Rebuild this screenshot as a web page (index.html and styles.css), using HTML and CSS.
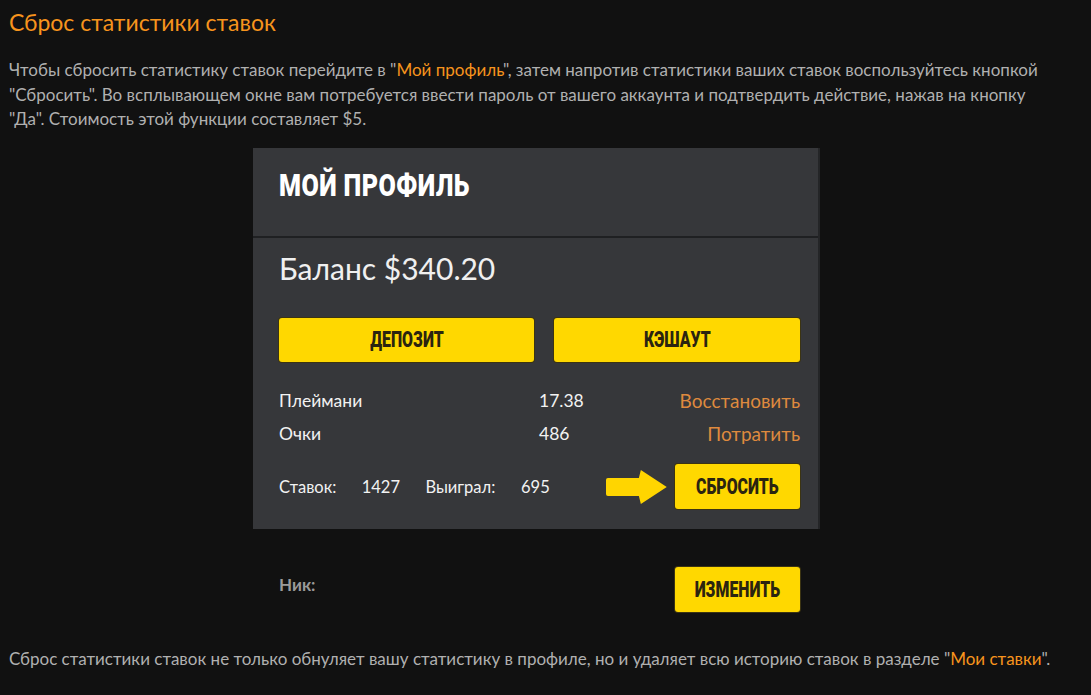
FILE: index.html
```html
<!DOCTYPE html>
<html lang="ru">
<head>
<meta charset="utf-8">
<link rel="stylesheet" href="styles.css">
</head>
<body>
<h2 class="title">Сброс статистики ставок</h2>
<p class="text top">Чтобы сбросить статистику ставок перейдите в "<a class="link">Мой профиль</a>", затем напротив статистики ваших ставок воспользуйтесь кнопкой "Сбросить". Во всплывающем окне вам потребуется ввести пароль от вашего аккаунта и подтвердить действие, нажав на кнопку "Да". Стоимость этой функции составляет $5.</p>
<div class="shot">
  <div class="panel">
    <div class="panel-head"><span class="cond head-title">МОЙ ПРОФИЛЬ</span></div>
    <div class="panel-body">
      <div class="balance">Баланс $340.20</div>
      <div class="btns">
        <div class="btn wide"><span class="cond">ДЕПОЗИТ</span></div>
        <div class="btn wide"><span class="cond">КЭШАУТ</span></div>
      </div>
      <div class="row"><span class="lbl">Плеймани</span><span class="val">17.38</span><span class="act">Восстановить</span></div>
      <div class="row"><span class="lbl">Очки</span><span class="val">486</span><span class="act">Потратить</span></div>
      <div class="row stats">
        <span class="s1">Ставок:</span><span class="s2">1427</span><span class="s3">Выиграл:</span><span class="s4">695</span>
        <svg class="arrow" width="64" height="36" viewBox="0 0 64 36"><path d="M3 9 L34 9 L36 1 L62 18 L36 35 L34 27 L3 27 Q1 27 1 25 L1 11 Q1 9 3 9 Z" fill="#ffd500"/></svg>
        <div class="btn small"><span class="cond">СБРОСИТЬ</span></div>
      </div>
    </div>
  </div>
  <div class="nick-row">
    <span class="nick">Ник:</span>
    <div class="btn small"><span class="cond">ИЗМЕНИТЬ</span></div>
  </div>
</div>
<p class="text bottom">Сброс статистики ставок не только обнуляет вашу статистику в профиле, но и удаляет всю историю ставок в разделе "<a class="link">Мои ставки</a>".</p>
</body>
</html>
```
FILE: styles.css
```css
html, body { background: #111111; }
body {
  margin: 0;
  padding: 0 9px;
  font-family: Lato, "Open Sans", sans-serif;
  color: #b3b3b3;
}
.title {
  margin: 0;
  padding-top: 7px;
  font-weight: 400;
  font-size: 23px;
  line-height: 30px;
  color: #f7941d;
}
.text {
  margin: 21px 0 0;
  font-size: 17px;
  line-height: 24.5px;
  color: #b0b0b0;
}
.text.top { max-width: 1042px; }
.link { color: #f7941d; }
.shot {
  width: 567px;
  margin: 16px 0 0 244px;
  background: #111111;
}
.panel {
  background: #36373a;
  border-right: 2px solid #242527;
}
.panel-head {
  height: 90px;
  border-bottom: 2px solid #1f2022;
  padding-left: 26px;
  padding-bottom: 13px;
  box-sizing: border-box;
  display: flex;
  align-items: center;
}
.cond {
  display: inline-block;
  font-family: Roboto, "Liberation Sans", sans-serif;
  font-weight: 900;
  transform: scaleX(0.72);
}
.head-title {
  color: #ffffff;
  font-size: 31px;
  transform: scaleX(0.81);
  transform-origin: left center;
  letter-spacing: 0.5px;
}
.panel-body {
  padding: 12px 18px 13px 26px;
}
.balance {
  font-size: 30px;
  line-height: 36px;
  color: #f0f0f0;
}
.btns {
  display: flex;
  gap: 20px;
  margin-top: 32px;
}
.btn {
  background: #ffd800;
  border-radius: 3px;
  display: flex;
  align-items: center;
  justify-content: center;
  color: #2b2410;
  box-shadow: 0 0 0 1px #3c3412;
}
.btn .cond { font-size: 22px; }
.btn.wide { height: 44px; }
.btn.wide:first-child { width: 255px; }
.btn.wide:last-child { width: 246px; }
.row {
  display: flex;
  align-items: center;
  font-size: 17.5px;
  color: #f2f2f2;
  height: 33px;
}
.btns + .row { margin-top: 22px; }
.lbl { width: 260px; }
.val { flex: 1; }
.act { color: #df8a3e; font-size: 19px; }
.stats {
  margin-top: 8px;
  height: 58px;
  font-size: 16.5px;
}
.s1 { width: 83px; }
.s2 { width: 64px; }
.s3 { width: 96px; }
.s4 { width: 84px; }
.arrow { margin-right: 7px; }
.btn.small { width: 125px; height: 45px; }
.nick-row {
  display: flex;
  align-items: center;
  justify-content: space-between;
  padding: 38px 20px 22px 26px;
}
.nick {
  color: #9a9a9a;
  font-weight: 700;
  font-size: 17px;
  margin-top: -10px;
}
.text.bottom { margin-top: 13px; font-size: 17px; }
```
